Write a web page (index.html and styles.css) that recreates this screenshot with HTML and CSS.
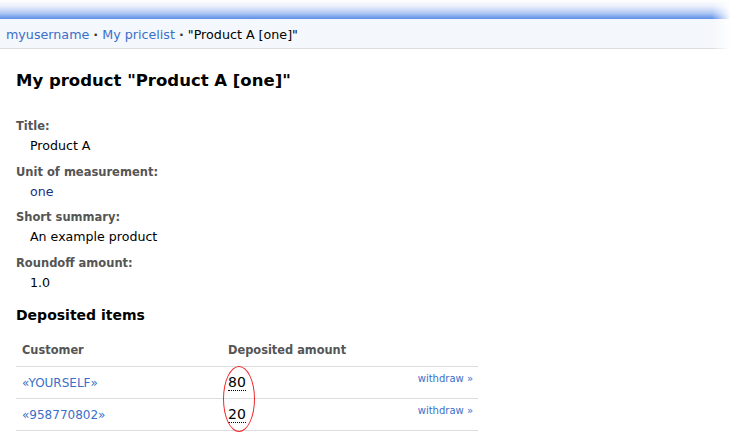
FILE: index.html
```html
<!DOCTYPE html>
<html>
<head>
<meta charset="utf-8">
<link rel="stylesheet" href="styles.css">
</head>
<body>
<div class="topglow"></div>
<div class="crumbs">
  <a href="#">myusername</a> <span class="sep">·</span> <a href="#">My pricelist</a> <span class="sep">·</span> <span class="cur">"Product A [one]"</span>
</div>
<div class="content">
  <h1>My product "Product A [one]"</h1>
  <dl class="props">
    <dt>Title:</dt>
    <dd>Product A</dd>
    <dt>Unit of measurement:</dt>
    <dd><span class="unit">one</span></dd>
    <dt>Short summary:</dt>
    <dd>An example product</dd>
    <dt>Roundoff amount:</dt>
    <dd>1.0</dd>
  </dl>
  <h2>Deposited items</h2>
  <div class="tablewrap">
    <table class="items">
      <thead>
        <tr><th class="c1">Customer</th><th class="c2">Deposited amount</th><th class="c3"></th></tr>
      </thead>
      <tbody>
        <tr><td><a href="#">«YOURSELF»</a></td><td><span class="amt">80</span></td><td class="act"><a href="#">withdraw »</a></td></tr>
        <tr><td><a href="#">«958770802»</a></td><td><span class="amt">20</span></td><td class="act"><a href="#">withdraw »</a></td></tr>
      </tbody>
    </table>
    <div class="mark"></div>
  </div>
</div>
<div class="fade"></div>
</body>
</html>
```
FILE: styles.css
```css
html, body {
  margin: 0;
  padding: 0;
  background: #fff;
  font-family: "DejaVu Sans", Verdana, sans-serif;
  color: #000;
  overflow: hidden;
  width: 734px;
  height: 445px;
  position: relative;
}
a { color: #3a6fc9; text-decoration: none; }

.topglow {
  height: 19px;
  background: linear-gradient(to bottom, #ffffff 0%, #e8eefb 35%, #adc6f3 70%, #5b8ee9 100%);
}
.crumbs {
  height: 29px;
  line-height: 31px;
  background: #f4f7fb;
  border-bottom: 1px solid #dcdcdc;
  padding-left: 6px;
  font-size: 12.7px;
  color: #000;
}
.crumbs a { color: #3a6fc9; }
.crumbs .sep { color: #333; font-weight: bold; }

.content { padding-left: 16px; }

h1 {
  margin: 20px 0 0 0;
  font-size: 16.5px;
  line-height: 24px;
  font-weight: bold;
}
.props { margin: 23px 0 0 0; }
.props dt {
  font-size: 11.5px;
  font-weight: bold;
  color: #555;
  line-height: 20px;
}
.props dd {
  font-size: 12.6px;
  margin: 0 0 5.5px 14px;
  line-height: 20px;
  color: #000;
}
.props .unit { color: #1a2f80; }

h2 {
  margin: 12px 0 0 0;
  font-size: 14px;
  line-height: 20px;
  font-weight: bold;
}

.tablewrap { position: relative; width: 462px; margin-top: 10px; }
.items {
  width: 462px;
  border-collapse: collapse;
  font-size: 12px;
}
.items tr { height: 32px; }
.items th {
  text-align: left;
  color: #555;
  font-size: 11.4px;
  font-weight: bold;
  line-height: 16px;
  padding: 0 0 0 6px;
  border-bottom: 1px solid #ddd;
  vertical-align: middle;
}
.items th.c1 { width: 200px; }
.items th.c2 { width: 170px; }
.items td {
  padding: 0 0 0 6px;
  line-height: 16px;
  border-bottom: 1px solid #ddd;
  vertical-align: middle;
}
.items td a { color: #3a6fc9; }
.amt {
  font-size: 14px;
  border-bottom: 1px dotted #000;
  line-height: 16px;
  display: inline-block;
  vertical-align: middle;
}
.items td.act {
  text-align: right;
  vertical-align: top;
  padding: 6px 5px 0 0;
  font-size: 10px;
  line-height: 12px;
}
.mark {
  position: absolute;
  left: 207px;
  top: 31px;
  width: 30px;
  height: 64px;
  border: 1px solid #f0262a;
  border-radius: 50%;
}
.fade {
  position: absolute;
  top: 0;
  right: 0;
  width: 22px;
  height: 60px;
  background: linear-gradient(to right, rgba(255,255,255,0), #fff 85%);
}
```
